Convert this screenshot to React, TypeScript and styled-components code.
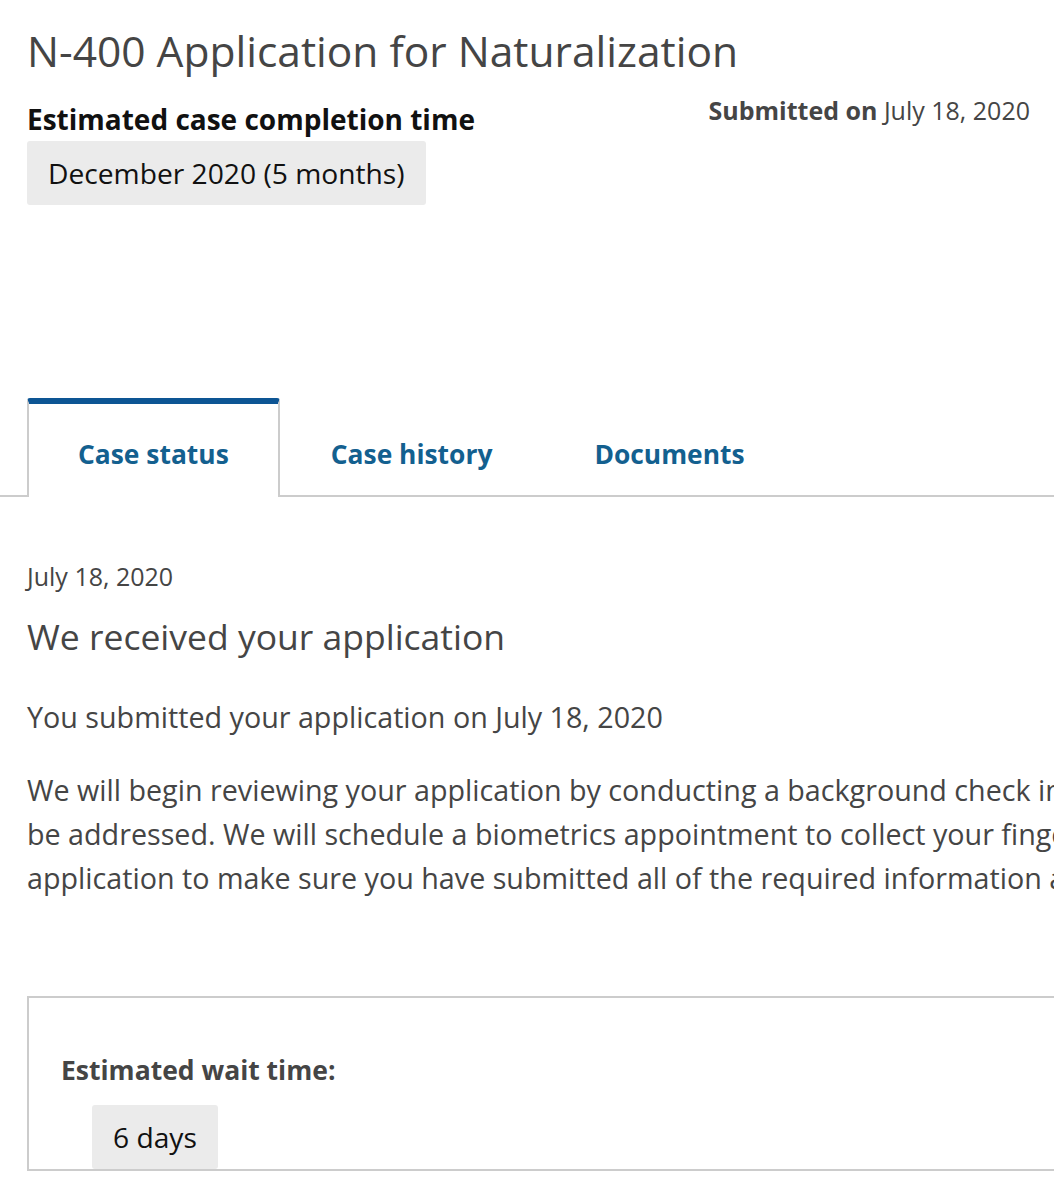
import React from 'react';
import styled, { createGlobalStyle, css } from 'styled-components';

const GlobalStyle = createGlobalStyle`
  html, body {
    margin: 0;
    padding: 0;
    background: #ffffff;
    overflow-x: hidden;
  }
  body {
    font-family: 'Open Sans', 'Noto Sans', sans-serif;
    color: #454545;
  }
`;

const Page = styled.div`
  width: 100%;
  padding-top: 25px;
`;

const Header = styled.header`
  padding: 0 24px 0 27px;
`;

const Title = styled.h1`
  margin: 0;
  font-size: 42.5px;
  line-height: 51px;
  font-weight: 400;
  color: #454545;
`;

const SummaryRow = styled.div`
  display: flex;
  justify-content: space-between;
  align-items: flex-start;
  margin-top: 18px;
`;

const Estimate = styled.div`
  display: flex;
  flex-direction: column;
  align-items: flex-start;
  gap: 4px;
  margin-top: 7px;
`;

const EstimateLabel = styled.div`
  font-size: 28px;
  line-height: 36px;
  font-weight: 700;
  color: #111111;
`;

const Pill = styled.div<{ $indent?: number }>`
  display: inline-block;
  background: #ebebeb;
  border-radius: 3px;
  padding: 12px 21px;
  font-size: 28.2px;
  line-height: 40px;
  color: #111111;
  margin-left: ${({ $indent }) => $indent ?? 0}px;
`;

const Submitted = styled.div`
  font-size: 25px;
  line-height: 32px;
  color: #454545;

  strong {
    font-weight: 700;
  }
`;

const TabBar = styled.nav`
  display: flex;
  margin-top: 193px;
  padding-left: 27px;
  border-bottom: 2px solid #cccccc;
`;

const Tab = styled.div<{ $active?: boolean }>`
  padding: 32px 49px 23px;
  border: 2px solid transparent;
  border-top: 6px solid transparent;
  border-bottom: none;
  font-size: 26.4px;
  line-height: 36px;
  font-weight: 700;
  color: #13608f;
  border-radius: 3px 3px 0 0;

  ${({ $active }) =>
    $active &&
    css`
      border-color: #cccccc;
      border-top-color: #0d5594;
      background: #ffffff;
      margin-bottom: -2px;
      padding-bottom: 25px;
    `}
`;

const Panel = styled.section`
  width: 1400px;
  padding: 63px 0 40px 27px;
`;

const EventDate = styled.div`
  font-size: 25px;
  line-height: 32px;
`;

const EventTitle = styled.h2`
  margin: 22px 0 0;
  font-size: 35.5px;
  line-height: 44px;
  font-weight: 400;
`;

const Text = styled.p<{ $gap: number }>`
  margin: ${({ $gap }) => $gap}px 0 0;
  font-size: 28.7px;
  line-height: 44px;
  white-space: nowrap;
`;

const WaitBox = styled.div`
  margin-top: 96px;
  border: 2px solid #cccccc;
  padding: 54px 32px 0;
`;

const WaitLabel = styled.div`
  font-size: 26.5px;
  line-height: 36px;
  font-weight: 700;
  margin-bottom: 17px;
`;

const App = (): React.ReactElement => (
  <>
    <GlobalStyle />
    <Page>
      <Header>
        <Title>N-400 Application for Naturalization</Title>
        <SummaryRow>
          <Estimate>
            <EstimateLabel>Estimated case completion time</EstimateLabel>
            <Pill>December 2020 (5 months)</Pill>
          </Estimate>
          <Submitted>
            <strong>Submitted on</strong> July 18, 2020
          </Submitted>
        </SummaryRow>
      </Header>

      <TabBar>
        <Tab $active>Case status</Tab>
        <Tab>Case history</Tab>
        <Tab>Documents</Tab>
      </TabBar>

      <Panel>
        <EventDate>July 18, 2020</EventDate>
        <EventTitle>We received your application</EventTitle>
        <Text $gap={37}>You submitted your application on July 18, 2020</Text>
        <Text $gap={29}>
          We will begin reviewing your application by conducting a background check including a review of any
          issues that may need to
          <br />
          be addressed. We will schedule a biometrics appointment to collect your fingerprints, photograph, and
          signature. We will also review your
          <br />
          application to make sure you have submitted all of the required information and evidence.
        </Text>
        <WaitBox>
          <WaitLabel>Estimated wait time:</WaitLabel>
          <Pill $indent={31}>6 days</Pill>
        </WaitBox>
      </Panel>
    </Page>
  </>
);

export default App;
